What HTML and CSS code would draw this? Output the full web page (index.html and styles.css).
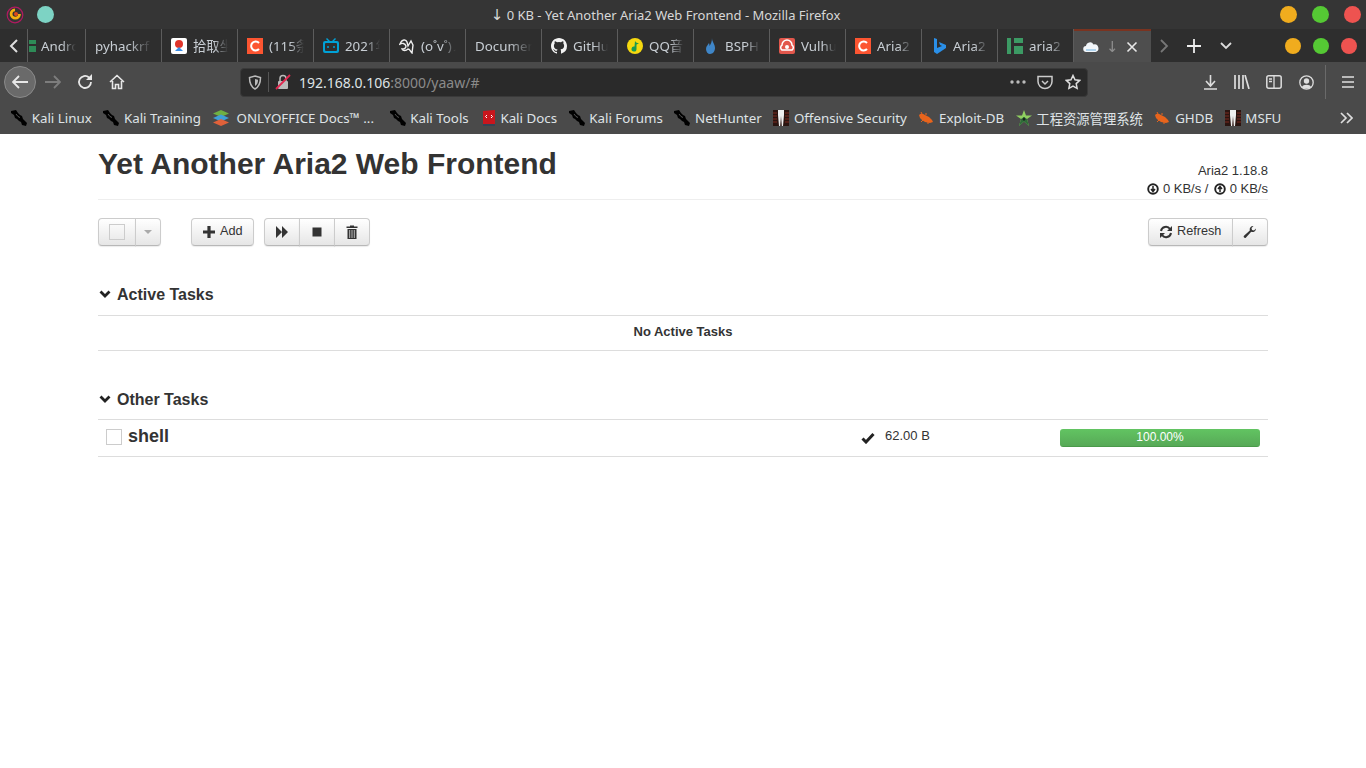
FILE: index.html
```html
<!DOCTYPE html>
<html lang="en">
<head>
<meta charset="UTF-8">
<title>↓ 0 KB - Yet Another Aria2 Web Frontend</title>
<link rel="stylesheet" href="styles.css">
</head>
<body>
<svg class="defs" width="0" height="0">
  <symbol id="kali" viewBox="0 0 16 16"><path d="M0 1l5-1 2 3 2 2 2 1 1 3 4 4-1 3-4-1-1-3-2-1-2-2-2-1-1-3-3-2z" fill="#000"/><path d="M5 4l2 2.500 2 1" stroke="#777" stroke-width=".7" fill="none"/></symbol>
  <symbol id="off" viewBox="0 0 16 16"><rect width="16" height="16" fill="#2a1410"/><path d="M5 0h6v5l-1 11H8.800L8 6l-.8 10H6L5 5z" fill="#eee"/><path d="M0 3h4M0 6h4M0 9h4M0 12h4M12 3h4M12 6h4M12 9h4M12 12h4" stroke="#7a2a20"/></symbol>
  <symbol id="bug" viewBox="0 0 16 16"><path d="M1 5c2-2 4-1 6 0l4 2 3 3 1 2-3 1-5-1-3-2-2-2z" fill="#e8641c"/><path d="M4 4L3 2M8 5l0-2M5 10l-2 2M10 12l0 2" stroke="#e8641c"/></symbol>
  <symbol id="csdn" viewBox="0 0 16 16"><rect width="16" height="16" fill="#fc5531"/><path d="M12 5a4.500 4.500 0 1 0 0 6" stroke="#fff" stroke-width="2" fill="none"/></symbol>
</svg>

<div class="titlebar">
  <div class="title-left">
    <svg class="ic18" viewBox="0 0 18 18"><circle cx="9" cy="9" r="7.800" fill="none" stroke="#b01a60" stroke-width="1.200"/><path d="M13.500 8a4.200 4.200 0 1 1-4.500-4.200" fill="none" stroke="#f5b010" stroke-width="2.800"/><circle cx="10" cy="8" r="2" fill="#e04a1a"/></svg>
    <span class="dot dot-teal"></span>
  </div>
  <div class="title-text"><span class="arrow-glyph">↓</span> 0 KB - Yet Another Aria2 Web Frontend - Mozilla Firefox</div>
  <div class="title-right">
    <span class="dot dot-yellow"></span>
    <span class="dot dot-green"></span>
    <span class="dot dot-red"></span>
  </div>
</div>

<div class="tabbar">
  <svg class="tab-arrow" width="27" height="33" viewBox="0 0 27 33"><path d="M17 11l-6 6 6 6" fill="none" stroke="#ddd" stroke-width="2"/></svg>
  <div class="tab tab-first">
    <svg class="ic16 clip" viewBox="0 0 7 16"><path d="M0 2h7v4H0zM0 8h7v6H0z" fill="#2e8b57"/></svg>
    <span class="tab-label">Android</span>
  </div>
  <div class="tab"><span class="tab-label">pyhackrf</span></div>
  <div class="tab">
    <svg class="ic16" viewBox="0 0 16 16"><rect width="16" height="16" rx="2" fill="#fff"/><circle cx="8" cy="6" r="4" fill="#e0352b"/><path d="M4 13l4-4 4 4z" fill="#3a8ee6"/></svg>
    <span class="tab-label">拾取坐标系统</span>
  </div>
  <div class="tab"><svg class="ic16"><use href="#csdn"/></svg><span class="tab-label">(115条消息)</span></div>
  <div class="tab">
    <svg class="ic16" viewBox="0 0 16 16"><path d="M4 0l3 3h2l3-3 1 1-2 2h3a2 2 0 0 1 2 2v8a2 2 0 0 1-2 2H2a2 2 0 0 1-2-2V5a2 2 0 0 1 2-2h3L3 1z" fill="#00a1d6"/><rect x="2" y="5" width="12" height="8" rx="1" fill="#2f2f2f"/><path d="M5 8v2M11 8v2" stroke="#00a1d6" stroke-width="1.500"/></svg>
    <span class="tab-label">2021年</span>
  </div>
  <div class="tab">
    <svg class="ic16" viewBox="0 0 16 16"><path d="M1 6c2-5 6-5 7-2l1 4 3-5 2 4-1 8c-2-2-2-4-4-4-2 2-5 2-6 0 2 0 4-1 4-3-1-3-4-3-6-2z" fill="none" stroke="#eee" stroke-width="1.400"/></svg>
    <span class="tab-label">(o˚v˚)ノ</span>
  </div>
  <div class="tab"><span class="tab-label">Document</span></div>
  <div class="tab">
    <svg class="ic16" viewBox="0 0 16 16"><path fill="#f2f2f2" d="M8 0C3.580 0 0 3.580 0 8c0 3.540 2.290 6.530 5.470 7.590.4.070.55-.17.55-.38v-1.340c-2.230.48-2.700-1.070-2.700-1.070-.36-.93-.89-1.170-.89-1.170-.73-.5.050-.49.050-.49.800.060 1.230.830 1.230.830.710 1.220 1.870.870 2.330.660.070-.520.280-.870.510-1.070-1.780-.200-3.640-.890-3.640-3.950 0-.870.310-1.590.820-2.150-.080-.200-.360-1.020.080-2.120 0 0 .670-.210 2.200.820a7.600 7.600 0 0 1 4 0c1.530-1.040 2.200-.820 2.200-.820.440 1.100.160 1.920.080 2.120.510.560.820 1.270.820 2.150 0 3.070-1.870 3.750-3.650 3.950.290.250.540.730.540 1.480v2.200c0 .210.150.460.550.380A8 8 0 0 0 16 8c0-4.420-3.580-8-8-8z"/></svg>
    <span class="tab-label">GitHub</span>
  </div>
  <div class="tab">
    <svg class="ic16" viewBox="0 0 16 16"><circle cx="8" cy="8" r="8" fill="#f6d90f"/><path d="M8 3c1 1.500 2 2 4 2.500L9.500 6.500V11a2.500 2.500 0 1 1-2-2.400z" fill="#1a9a50"/></svg>
    <span class="tab-label">QQ音乐</span>
  </div>
  <div class="tab">
    <svg class="ic16" viewBox="0 0 16 16"><path d="M9 0c0 4 3 6 3 10 0 3-2 6-5 6-2 0-4-2-4-5 0-3 2-4 3-6 .5 1 .5 2 .5 3C8 6 9 3 9 0z" fill="#3f86c8"/></svg>
    <span class="tab-label">BSPHP</span>
  </div>
  <div class="tab">
    <svg class="ic16" viewBox="0 0 16 16"><rect width="16" height="16" rx="2" fill="#e2574c"/><path d="M3 12a3 3 0 0 1 0-5 5 5 0 0 1 10 0 3 3 0 0 1 0 5z" fill="none" stroke="#fff" stroke-width="1.500"/><circle cx="8" cy="9" r="2" fill="#fff"/></svg>
    <span class="tab-label">Vulhub</span>
  </div>
  <div class="tab"><svg class="ic16"><use href="#csdn"/></svg><span class="tab-label">Aria2 使用</span></div>
  <div class="tab">
    <svg class="ic16" viewBox="0 0 16 16"><path d="M3 0l3 1v9l5-2-2-1-1-3 7 3v3l-9 6-3-2z" fill="#2a8fe8"/></svg>
    <span class="tab-label">Aria2 下载</span>
  </div>
  <div class="tab">
    <svg class="ic16" viewBox="0 0 16 16"><path d="M0 0h4v16H0zM7 0h9v5H7zM7 8h9v8H7z" fill="#3c9a64"/></svg>
    <span class="tab-label">aria2 使用</span>
  </div>
  <div class="tab tab-active">
    <svg class="ic16" viewBox="0 0 16 16"><path d="M3.500 13a3 3 0 0 1-.5-6 4 4 0 0 1 7.500-1.500A3.500 3.500 0 0 1 12.500 13z" fill="#f2f6fa"/><path d="M3 11h10" stroke="#6ab0e0"/></svg>
    <span class="tab-label tab-label-short"><span class="arrow-glyph">↓</span> 0 KB</span>
    <svg class="tab-close" width="12" height="12" viewBox="0 0 12 12"><path d="M1.500 1.500l9 9M10.500 1.500l-9 9" stroke="#e8e8e8" stroke-width="1.600"/></svg>
  </div>
  <div class="tab-tools">
    <svg class="tab-tool tab-tool-next" width="10" height="14" viewBox="0 0 10 14"><path d="M2 1l6 6-6 6" fill="none" stroke="#777" stroke-width="1.800"/></svg>
    <svg class="tab-tool tab-tool-plus" width="14" height="14" viewBox="0 0 14 14"><path d="M7 0v14M0 7h14" stroke="#eee" stroke-width="1.800"/></svg>
    <svg class="tab-tool tab-tool-down" width="12" height="8" viewBox="0 0 12 8"><path d="M1 1l5 5 5-5" fill="none" stroke="#ddd" stroke-width="1.800"/></svg>
  </div>
  <div class="tab-dots">
    <span class="dot dot-yellow"></span>
    <span class="dot dot-green"></span>
    <span class="dot dot-red"></span>
  </div>
</div>

<div class="navbar">
  <div class="nav-left">
    <span class="back-btn"><svg width="16" height="14" viewBox="0 0 16 14"><path d="M7 1L1 7l6 6M1 7h15" fill="none" stroke="#e8e8e8" stroke-width="1.800"/></svg></span>
    <svg class="nav-forward" width="16" height="14" viewBox="0 0 16 14"><path d="M9 1l6 6-6 6M15 7H0" fill="none" stroke="#7d7d7d" stroke-width="1.800"/></svg>
    <svg class="nav-reload" width="16" height="16" viewBox="0 0 16 16"><path d="M14 8a6 6 0 1 1-2-4.500" fill="none" stroke="#e8e8e8" stroke-width="1.800"/><path d="M15 0v6H9z" fill="#e8e8e8"/></svg>
    <svg class="nav-home" width="16" height="16" viewBox="0 0 16 16"><path d="M1 8l7-6.500L15 8M3.500 7v7.500h3v-4h3v4h3V7" fill="none" stroke="#e8e8e8" stroke-width="1.600"/></svg>
  </div>
  <div class="urlbar">
    <svg class="url-shield" width="14" height="15" viewBox="0 0 14 15"><path d="M7 1l5.500 1.500c0 5-1 9-5.500 11.500C2.500 11.500 1.500 7.500 1.500 2.500z" fill="none" stroke="#bbb" stroke-width="1.500"/><path d="M7 4l3 .8c0 3-.6 4.700-3 6.200z" fill="#bbb"/></svg>
    <span class="url-sep"></span>
    <svg class="url-lock" width="16" height="16" viewBox="0 0 16 16"><rect x="3" y="7" width="10" height="8" rx="1" fill="#bbb"/><path d="M5 7V4.500a3 3 0 0 1 6 0V7" fill="none" stroke="#bbb" stroke-width="1.500"/><path d="M1 15L15 1" stroke="#e22850" stroke-width="1.800"/></svg>
    <span class="url-text">192.168.0.106<span class="url-dim">:8000/yaaw/#</span></span>
    <svg class="url-more" width="16" height="4" viewBox="0 0 16 4"><circle cx="2" cy="2" r="1.700" fill="#bbb"/><circle cx="8" cy="2" r="1.700" fill="#bbb"/><circle cx="14" cy="2" r="1.700" fill="#bbb"/></svg>
    <svg class="url-pocket" width="16" height="15" viewBox="0 0 16 15"><path d="M1 1.500h14v5a7 7 0 0 1-14 0z" fill="none" stroke="#ccc" stroke-width="1.500"/><path d="M5 6l3 3 3-3" fill="none" stroke="#ccc" stroke-width="1.500"/></svg>
    <svg class="url-star" width="16" height="16" viewBox="0 0 16 16"><path d="M8 1.500l2 4.300 4.700.6-3.500 3.200.9 4.700L8 12l-4.100 2.300.9-4.700L1.300 6.400 6 5.800z" fill="none" stroke="#ddd" stroke-width="1.500"/></svg>
  </div>
  <div class="nav-right">
    <svg class="nav-download" width="13" height="15" viewBox="0 0 13 15"><path d="M6.500 0v10M2 6l4.500 5L11 6M0 14h13" fill="none" stroke="#ddd" stroke-width="1.600"/></svg>
    <svg class="nav-library" width="16" height="14" viewBox="0 0 16 14"><path d="M1 0v14M5 0v14M9 0v14M11 0l4 14" fill="none" stroke="#ddd" stroke-width="1.700"/></svg>
    <svg width="16" height="14" viewBox="0 0 16 14"><rect x=".8" y=".8" width="14.400" height="12.400" rx="2" fill="none" stroke="#ddd" stroke-width="1.500"/><path d="M8 1v12M3 4h3M3 6.500h3" stroke="#ddd" stroke-width="1.300"/></svg>
    <svg class="nav-account" width="15" height="15" viewBox="0 0 15 15"><circle cx="7.500" cy="7.500" r="6.700" fill="none" stroke="#ddd" stroke-width="1.300"/><circle cx="7.500" cy="6" r="2.700" fill="#ddd"/><path d="M3 12c1-3 8-3 9 0-2 2-7 2-9 0z" fill="#ddd"/></svg>
    <span class="nav-sep"></span>
    <svg width="12" height="12" viewBox="0 0 12 12"><path d="M0 1h12M0 6h12M0 11h12" stroke="#e0e0e0" stroke-width="1.700"/></svg>
  </div>
</div>

<div class="bookmarks">
  <div class="bm"><svg class="ic16"><use href="#kali"/></svg>Kali Linux</div>
  <div class="bm"><svg class="ic16"><use href="#kali"/></svg>Kali Training</div>
  <div class="bm bm-wide">
    <svg class="ic18" viewBox="0 0 18 18"><path d="M9 1l8 3.500L9 8 1 4.500z" fill="#6fb043"/><path d="M9 5.500l8 3.500-8 3.500L1 9z" fill="#3fa0d8"/><path d="M9 10l8 3.500L9 17l-8-3.500z" fill="#e0613a"/></svg>
    ONLYOFFICE Docs™ ...
  </div>
  <div class="bm"><svg class="ic16"><use href="#kali"/></svg>Kali Tools</div>
  <div class="bm bm-docs">
    <svg class="ic14" viewBox="0 0 14 16"><path d="M1 1l12-1v14l-12 2z" fill="#c8161d"/><path d="M1 14h12v2H1z" fill="#345"/><path d="M5 5L3.500 6.500 5 8M9 5l1.500 1.500L9 8" fill="none" stroke="#fff"/></svg>
    Kali Docs
  </div>
  <div class="bm"><svg class="ic16"><use href="#kali"/></svg>Kali Forums</div>
  <div class="bm"><svg class="ic16"><use href="#kali"/></svg>NetHunter</div>
  <div class="bm"><svg class="ic16"><use href="#off"/></svg>Offensive Security</div>
  <div class="bm"><svg class="ic16"><use href="#bug"/></svg>Exploit-DB</div>
  <div class="bm">
    <svg class="ic16" viewBox="0 0 16 16"><path d="M8 0l2 5.500h6l-5 3.500 2 7-5-4.500L3 16l2-7-5-3.500h6z" fill="#8fd060"/><path d="M8 7l3 2 2 7-5-4.500L3 16l2-7z" fill="#2f6a3a"/><path d="M8 7l1.500 2.500L8 11l-1.500-1.500z" fill="#14241a"/></svg>
    工程资源管理系统
  </div>
  <div class="bm"><svg class="ic16"><use href="#bug"/></svg>GHDB</div>
  <div class="bm"><svg class="ic16"><use href="#off"/></svg>MSFU</div>
  <svg class="bm-more" width="13" height="12" viewBox="0 0 13 12"><path d="M1 1l5 5-5 5M7 1l5 5-5 5" fill="none" stroke="#ddd" stroke-width="1.700"/></svg>
</div>

<div class="container">
  <div class="page-header">
    <h1>Yet Another Aria2 Web Frontend</h1>
    <div class="global-info">
      <div>Aria2 1.18.8</div>
      <div>
        <svg class="ic-sm" viewBox="0 0 12 12"><circle cx="6" cy="6" r="4.800" fill="none" stroke="#222" stroke-width="1.900"/><path d="M6 3v5M4 6l2 2.500L8 6" fill="none" stroke="#222" stroke-width="1.500"/></svg>
        0 KB/s /
        <svg class="ic-sm ic-sm-up" viewBox="0 0 12 12"><circle cx="6" cy="6" r="4.800" fill="none" stroke="#222" stroke-width="1.900"/><path d="M6 9V4M4 6l2-2.500L8 6" fill="none" stroke="#222" stroke-width="1.500"/></svg>
        0 KB/s
      </div>
    </div>
  </div>

  <div class="toolbar">
    <div class="btn-group select-group">
      <button class="btn btn-check"><span class="checkbox checkbox-clear"></span></button>
      <button class="btn btn-caret"><span class="caret"></span></button>
    </div>
    <button class="btn btn-add">
      <svg class="ic-btn" viewBox="0 0 14 14"><path d="M7 1v12M1 7h12" stroke="#333" stroke-width="3.200"/></svg>
      <span class="btn-text">Add</span>
    </button>
    <div class="btn-group">
      <button class="btn btn-icon"><svg class="ic-btn" viewBox="0 0 14 14"><path d="M1 1l6 6-6 6zM7 1l6 6-6 6z" fill="#333"/></svg></button>
      <button class="btn btn-icon"><svg class="ic-btn" viewBox="0 0 14 14"><rect x="2.500" y="2.500" width="9" height="9" fill="#333"/></svg></button>
      <button class="btn btn-icon"><svg class="ic-btn" viewBox="0 0 14 14"><path d="M5 1.500V.5h4v1h3.500v1.500h-11V1.500zM2.500 4h9v10h-9z" fill="#333"/><path d="M4.700 5v8M7 5v8M9.300 5v8" stroke="#ddd" stroke-width=".8"/></svg></button>
    </div>
    <div class="btn-group toolbar-right">
      <button class="btn btn-refresh">
        <svg class="ic-btn" viewBox="0 0 14 14"><path d="M2 6a5 5 0 0 1 9-2M12 8a5 5 0 0 1-9 2" fill="none" stroke="#333" stroke-width="2"/><path d="M13 1v5H8zM1 13V8h5z" fill="#333"/></svg>
        <span class="btn-text">Refresh</span>
      </button>
      <button class="btn btn-icon"><svg class="ic-btn" viewBox="0 0 14 14"><path d="M13 3.500a3.500 3.500 0 0 1-4.800 3.300L3 12.500a1.300 1.300 0 0 1-2-1.800L6.800 5.500A3.500 3.500 0 0 1 10.500 1L8.500 3l.5 2 2 .5z" fill="#333"/></svg></button>
    </div>
  </div>

  <div class="section">
    <h4><svg class="chevron" viewBox="0 0 12 8"><path d="M1.500 1.500L6 6l4.500-4.500" fill="none" stroke="#222" stroke-width="2.800"/></svg>Active Tasks</h4>
    <div class="empty-row">No Active Tasks</div>
  </div>

  <div class="section">
    <h4 class="h4-other"><svg class="chevron" viewBox="0 0 12 8"><path d="M1.500 1.500L6 6l4.500-4.500" fill="none" stroke="#222" stroke-width="2.800"/></svg>Other Tasks</h4>
    <div class="task-row">
      <span class="checkbox checkbox-task"></span>
      <span class="task-name">shell</span>
      <svg class="task-check" viewBox="0 0 14 12"><path d="M1.500 6.500L5 10l7.500-8" fill="none" stroke="#222" stroke-width="3"/></svg>
      <span class="task-size">62.00 B</span>
      <div class="progress"><div class="progress-bar" style="width: 100%">100.00%</div></div>
    </div>
  </div>
</div>
</body>
</html>
```

FILE: styles.css
```css
html, body {
  margin: 0;
  padding: 0;
  background: #fff;
  overflow: hidden;
}
body {
  font-family: "Liberation Sans", Arial, sans-serif;
  color: #333;
  height: 768px;
}
.defs {
  display: block;
  height: 0;
}
.ic16 { width: 16px; height: 16px; flex: none; }
.ic18 { width: 18px; height: 18px; flex: none; }
.ic14 { width: 14px; height: 16px; flex: none; }
.dot {
  display: block;
  width: 17px;
  height: 17px;
  border-radius: 50%;
  flex: none;
}
.dot-teal { background: #7dd3c4; }
.dot-yellow { background: #f0ac1e; }
.dot-green { background: #55c934; }
.dot-red { background: #ee5350; }
.arrow-glyph {
  font-family: "DejaVu Sans", sans-serif;
  font-size: 15px;
  line-height: 1;
}

/* window title */
.titlebar {
  height: 29px;
  background: #353535;
  display: flex;
  align-items: center;
  font-family: "Noto Sans", sans-serif;
}
.title-left {
  width: 60px;
  box-sizing: border-box;
  padding-left: 6px;
  display: flex;
  align-items: center;
  gap: 13px;
}
.title-text {
  flex: 1;
  text-align: center;
  font-size: 13px;
  color: #d8d8d8;
}
.title-right {
  width: 95px;
  box-sizing: border-box;
  display: flex;
  justify-content: flex-end;
  gap: 15px;
  padding-right: 5px;
}

/* tabs */
.tabbar {
  height: 33px;
  background: #2e2e2e;
  display: flex;
  font-family: "Noto Sans", "Noto Sans CJK SC", sans-serif;
}
.tab-arrow { flex: none; }
.tab {
  width: 76px;
  box-sizing: border-box;
  height: 33px;
  flex: none;
  display: flex;
  align-items: center;
  gap: 6px;
  padding: 0 9px;
  border-right: 1px solid #5c5c5c;
  font-size: 13.33px;
  color: #c8ced4;
  overflow: hidden;
}
.tab-first {
  width: 59px;
  padding-left: 1px;
  gap: 5px;
  border-left: 1px solid #5c5c5c;
}
.tab-first .clip { width: 7px; }
.tab-label {
  flex: 1;
  min-width: 0;
  white-space: nowrap;
  overflow: hidden;
  -webkit-mask-image: linear-gradient(to right, #000 60%, transparent);
  mask-image: linear-gradient(to right, #000 60%, transparent);
}
.tab-active {
  width: 77px;
  background: #4e4e4e;
  border-right: none;
  border-top: 2px solid #7a3320;
  gap: 7px;
  padding-right: 13px;
}
.tab-label-short { color: #8f8f8f; }
.tab-close { flex: none; }
.tab-tools {
  width: 95px;
  display: flex;
  align-items: center;
  flex: none;
}
.tab-tool-next { margin-left: 8px; }
.tab-tool-plus { margin-left: 18px; }
.tab-tool-down { margin-left: 19px; }
.tab-dots {
  flex: 1;
  display: flex;
  align-items: center;
  gap: 12px;
  padding-left: 39px;
}
.tab-dots .dot {
  width: 16px;
  height: 16px;
}

/* nav */
.navbar {
  height: 40px;
  background: #4a4a4a;
  display: flex;
  align-items: center;
}
.nav-left {
  width: 240px;
  flex: none;
  display: flex;
  align-items: center;
}
.back-btn {
  width: 30px;
  height: 30px;
  margin-left: 4px;
  border: 1px solid #8a8a8a;
  border-radius: 50%;
  background: #6a6a6a;
  display: flex;
  align-items: center;
  justify-content: center;
}
.nav-forward { margin-left: 9px; }
.nav-reload { margin-left: 16px; }
.nav-home { margin-left: 16px; }
.urlbar {
  width: 848px;
  height: 29px;
  flex: none;
  box-sizing: border-box;
  background: #2a2a2a;
  border-radius: 4px;
  border: 1px solid #3a3a3a;
  display: flex;
  align-items: center;
  padding: 0 6px 0 7px;
  font-family: "Noto Sans", sans-serif;
}
.url-sep {
  width: 1px;
  height: 20px;
  background: #555;
  margin-left: 6px;
}
.url-lock { margin-left: 6px; }
.url-text {
  flex: 1;
  margin-left: 8px;
  font-size: 14px;
  color: #dfe3e6;
}
.url-dim { color: #8a8a8a; }
.url-pocket { margin-left: 11px; }
.url-star { margin-left: 12px; }
.nav-right {
  flex: 1;
  display: flex;
  align-items: center;
  gap: 16px;
  padding-left: 116px;
}
.nav-library { margin-left: 1px; }
.nav-account { margin-left: 1px; }
.nav-sep {
  width: 1px;
  height: 34px;
  background: #6a6a6a;
  margin-left: -5px;
}

/* bookmarks */
.bookmarks {
  height: 32px;
  box-sizing: border-box;
  background: #4a4a4a;
  display: flex;
  align-items: center;
  gap: 11.5px;
  padding: 0 13px 0 11px;
  font-family: "Noto Sans", "Noto Sans CJK SC", sans-serif;
  font-size: 13.33px;
  color: #dfe3e6;
}
.bm {
  display: flex;
  align-items: center;
  gap: 4.7px;
  white-space: nowrap;
}
.bm-wide {
  gap: 6px;
  margin-right: 4px;
}
.bm-docs {
  margin-left: 1.5px;
}
.bm-more {
  margin-left: auto;
}

/* page */
.container {
  width: 1170px;
  margin: 0 auto;
}
.page-header {
  height: 66px;
  box-sizing: border-box;
  border-bottom: 1px solid #eee;
  display: flex;
  justify-content: space-between;
}
h1 {
  margin: 0;
  padding-top: 11px;
  font-size: 30px;
  line-height: 38px;
  font-weight: bold;
}
.global-info {
  padding-top: 28px;
  text-align: right;
  font-size: 13px;
  line-height: 18px;
}
.ic-sm {
  width: 12px;
  height: 12px;
  vertical-align: -2px;
}
.ic-sm-up {
  margin-left: 2px;
}
.toolbar {
  display: flex;
  margin-top: 18px;
  height: 29px;
}
.btn-group {
  display: flex;
}
.select-group {
  margin-right: 30px;
}
.btn {
  height: 28px;
  box-sizing: border-box;
  padding: 0 12px;
  background: linear-gradient(to bottom, #fff, #e6e6e6);
  border: 1px solid #ccc;
  border-bottom-color: #b8b8b8;
  border-radius: 4px;
  box-shadow: 0 1px 1px rgba(0, 0, 0, 0.08);
  font-family: inherit;
  font-size: 12.7px;
  color: #333;
  display: flex;
  align-items: center;
}
.btn-text {
  margin-top: -3px;
}
.btn-group .btn {
  border-radius: 0;
  margin-left: -1px;
}
.btn-group .btn:first-child {
  border-radius: 4px 0 0 4px;
  margin-left: 0;
}
.btn-group .btn:last-child {
  border-radius: 0 4px 4px 0;
}
.btn-check { width: 38px; padding: 0 0 0 10px; }
.btn-caret { width: 26px; padding: 0 0 0 8px; }
.checkbox {
  display: block;
  width: 14px;
  height: 14px;
  border: 1px solid #ccc;
  background: #fff;
  flex: none;
}
.checkbox-clear {
  background: transparent;
}
.checkbox-task {
  margin-top: -2px;
}
.caret {
  display: block;
  border-top: 4px solid #aaa;
  border-left: 4px solid transparent;
  border-right: 4px solid transparent;
}
.btn-add {
  width: 63px;
  padding: 0 0 0 10px;
  margin-right: 10px;
  gap: 4px;
}
.btn-icon {
  width: 36px;
  padding: 0;
  justify-content: center;
}
.toolbar-right {
  margin-left: auto;
}
.btn-refresh {
  width: 85px;
  padding: 0 0 0 10px;
  gap: 4px;
}
.ic-btn {
  width: 14px;
  height: 14px;
  flex: none;
}
.section {
  margin-top: 36px;
}
h4 {
  margin: 0;
  height: 33px;
  box-sizing: border-box;
  border-bottom: 1px solid #ddd;
  display: flex;
  align-items: flex-start;
  font-size: 16px;
  line-height: 22px;
  font-weight: bold;
  padding-top: 1px;
}
.h4-other {
  padding-top: 2px;
}
.chevron {
  width: 12px;
  height: 8px;
  margin: 6px 6px 0 1px;
  flex: none;
}
.empty-row {
  height: 35px;
  box-sizing: border-box;
  border-bottom: 1px solid #ddd;
  text-align: center;
  font-size: 13px;
  font-weight: bold;
  line-height: 32px;
}
.task-row {
  height: 37px;
  box-sizing: border-box;
  border-bottom: 1px solid #ddd;
  display: flex;
  align-items: center;
  padding-left: 8px;
}
.task-name {
  margin-left: 6px;
  margin-top: -4px;
  font-size: 18px;
  font-weight: bold;
  width: 733px;
}
.task-check {
  width: 14px;
  height: 12px;
  flex: none;
}
.task-size {
  font-size: 13px;
  margin-left: 10px;
  width: 175px;
  margin-top: -5px;
}
.progress {
  width: 200px;
  height: 18px;
  border-radius: 3px;
  overflow: hidden;
  background: #f5f5f5;
}
.progress-bar {
  height: 100%;
  box-sizing: border-box;
  background: linear-gradient(to bottom, #62c462, #57a957);
  border-bottom: 1px solid #4a9a4a;
  color: #fff;
  font-size: 12px;
  line-height: 16px;
  text-align: center;
}
```
